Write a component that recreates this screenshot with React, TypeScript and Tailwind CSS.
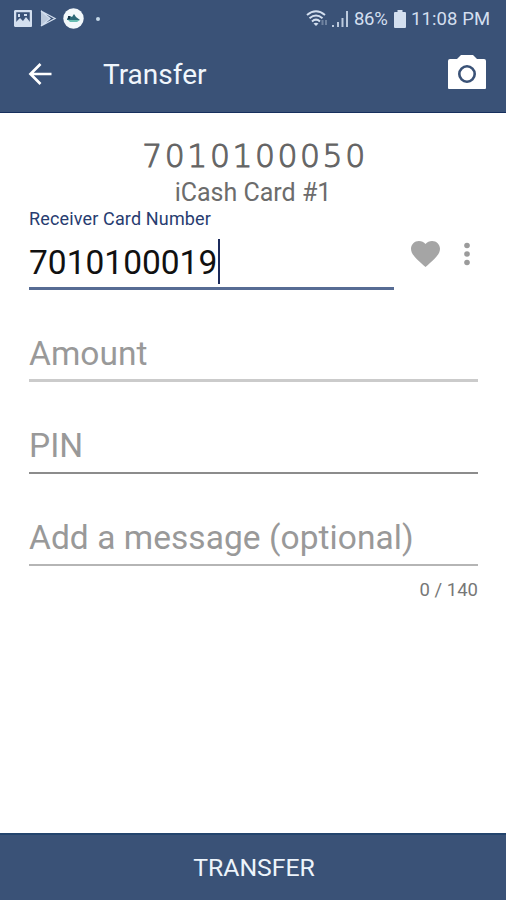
import { useState } from "react";

const fields = [
  { id: "amount", placeholder: "Amount", line: "border-b-3 border-[#cbcbcb]" },
  { id: "pin", placeholder: "PIN", line: "border-b-2 border-[#8c8c8c]" },
  { id: "message", placeholder: "Add a message (optional)", line: "border-b-2 border-[#b5b5b5]" },
];

const StatusBar = () => {
  return (
    <div className="flex h-[37px] items-center justify-between pl-[14px] pr-[15px] text-[#d3dfef]">
      <div className="flex items-center">
        <svg className="h-[17px] w-[18px]" viewBox="0 0 18 17" fill="none">
          <rect x="1" y="1" width="16" height="15" rx="1" stroke="currentColor" strokeWidth="2.5" />
          <path d="M2 12 6 8l3 3 3-4 4 5v3H2z" fill="currentColor" />
          <path d="M4 4h2v3H4zM10 4h3v2h-3z" fill="currentColor" />
        </svg>
        <svg className="ml-[8px] h-[17px] w-[17px]" viewBox="0 0 17 17" fill="currentColor">
          <path d="M1 1 10 8.5 1 16z" fillOpacity=".85" />
          <path d="m1 1 9 7.5L1 16M1 1l14 7.500L1 16" fill="none" stroke="currentColor" strokeWidth="1.300" />
        </svg>
        <svg className="ml-[6px] h-[21px] w-[21px]" viewBox="0 0 21 21">
          <circle cx="10.5" cy="10.5" r="10.2" fill="#f2f8fb" />
          <path d="M4 11q1-3 3-3l2 1 2-3 2 3 4 3H4z" fill="#2b6877" />
          <path d="M5 12h12l-3 2H7z" fill="#68bdb1" />
          <path d="M5 8h2v3H5z" fill="#173448" />
        </svg>
        <span className="ml-[12px] h-[4px] w-[4px] rounded-full bg-[#c5d9e8]" />
      </div>
      <div className="flex items-center font-['Roboto',sans-serif] text-[18.5px] leading-[37px]">
        <svg className="h-[19px] w-[23px]" viewBox="0 0 23 19" fill="none" stroke="currentColor" strokeWidth="2">
          <path d="M1 6q9-7.500 18 0" />
          <path d="M3.500 9.200q6.500-5.500 13 0" />
          <path d="M6 12.400q4-3.500 8 0" />
          <path d="m7.500 14.500 2.500 2.500 2.500-2.500q-2.500-1.500-5 0z" fill="currentColor" stroke="none" />
          <path d="M16.500 11v5M20 11v5" strokeWidth="2" opacity=".35" />
        </svg>
        <svg className="ml-[2px] h-[18px] w-[19px]" viewBox="0 0 19 18" fill="currentColor">
          <path d="M1 15h2v2H1zM6 12h2v5H6zM10.5 8h2v9h-2zM15 1h2v16h-2z" opacity=".85" />
        </svg>
        <span className="ml-[4px] w-[34px] whitespace-nowrap pt-px tracking-[-0.3px]">86%</span>
        <svg className="ml-[6px] h-[18px] w-[12px]" viewBox="0 0 12 18" fill="currentColor">
          <path d="M3.5 0h5v2H11q1 0 1 1v14q0 1-1 1H1q-1 0-1-1V3q0-1 1-1h2.500z" />
        </svg>
        <span className="ml-[5px] w-[80px] whitespace-nowrap pt-px tracking-[0.1px]">11:08 PM</span>
      </div>
    </div>
  );
};

const App = () => {
  const [cardNumber] = useState("7010100019");

  return (
    <div className="flex h-[900px] w-[506px] flex-col overflow-hidden bg-white font-['Roboto',sans-serif]">
      <header className="h-[113px] shrink-0 border-b border-[#162f5d] bg-[#3a5277]">
        <StatusBar />
        <div className="flex h-[74px] items-center pl-[28px] pr-[20px] text-white">
          <svg className="h-[24px] w-[25px]" viewBox="0 0 25 24" fill="none" stroke="currentColor" strokeWidth="2.7">
            <path d="M23.500 12H2.500M12.500 2 2.500 12 12.500 22" />
          </svg>
          <h1 className="ml-[50px] pt-[2px] text-[28px] leading-[32px] text-[#f0f6fc]">Transfer</h1>
          <svg className="mb-[3px] ml-auto h-[35px] w-[38px]" viewBox="0 0 38 35">
            <path d="M13 0h12l4 4h7q2 0 2 2v27q0 1-1 1H1q-1 0-1-1V6q0-2 2-2h7z" fill="white" />
            <circle cx="19" cy="19" r="7.700" fill="none" stroke="#3a5277" strokeWidth="2.600" />
          </svg>
        </div>
      </header>

      <main className="flex-1 px-[28px] pt-[27px]">
        <div className="flex flex-col items-center text-[#646464]">
          <p className="h-[38px] pl-[4px] font-['DejaVu_Sans',sans-serif] text-[31.5px] font-extralight leading-[32px] tracking-[2.5px] [-webkit-text-stroke:1px_#646464]">
            7010100050
          </p>
          <p className="h-[30px] text-[25px] leading-[30px] text-[#6c6c6c]">iCash Card #1</p>
        </div>

        <div className="flex">
          <div className="ml-px w-[365px]">
            <label className="block h-[22px] text-[18px] leading-[22px] tracking-[0.15px] text-[#273c70]">
              Receiver Card Number
            </label>
            <div className="flex h-[60px] items-end border-b-3 border-[#576c94] pb-[3px]">
              <span className="text-[33.500px] leading-[42px] text-[#111]">{cardNumber}</span>
              <span className="ml-px h-[45px] w-[2px] bg-[#1c2b5c]" />
            </div>
          </div>
          <svg className="ml-[17px] mt-[33px] h-[26px] w-[29px]" viewBox="2 3 20 18.35" preserveAspectRatio="none" fill="#a5a5a5">
            <path d="m12 21.350-1.450-1.320C5.400 15.360 2 12.280 2 8.500 2 5.420 4.420 3 7.500 3c1.740 0 3.410.81 4.500 2.090C13.090 3.810 14.760 3 16.500 3 19.580 3 22 5.420 22 8.500c0 3.780-3.400 6.860-8.550 11.540z" />
          </svg>
          <svg className="ml-[24px] mt-[34px] h-[24px] w-[6px]" viewBox="0 0 6 24" fill="#9b9b9b">
            <circle cx="3" cy="3.500" r="2.800" />
            <circle cx="3" cy="12" r="2.800" />
            <circle cx="3" cy="20.500" r="2.800" />
          </svg>
        </div>

        {fields.map((field) => (
          <div key={field.id} className={`ml-px mt-[40px] h-[52px] pt-px ${field.line}`}>
            <span className="block text-[33.500px] leading-[46px] tracking-[0.05px] text-[#999]">
              {field.placeholder}
            </span>
          </div>
        ))}
        <p className="mt-[12px] text-right text-[18.500px] leading-[24px] text-[#777]">0 / 140</p>
      </main>

      <button className="h-[67px] shrink-0 border-t-2 border-[#23446d] bg-[#3a5277] pl-[2px] text-[24.800px] leading-[30px] text-[#edf4fb]">
        TRANSFER
      </button>
    </div>
  );
};

export default App;
